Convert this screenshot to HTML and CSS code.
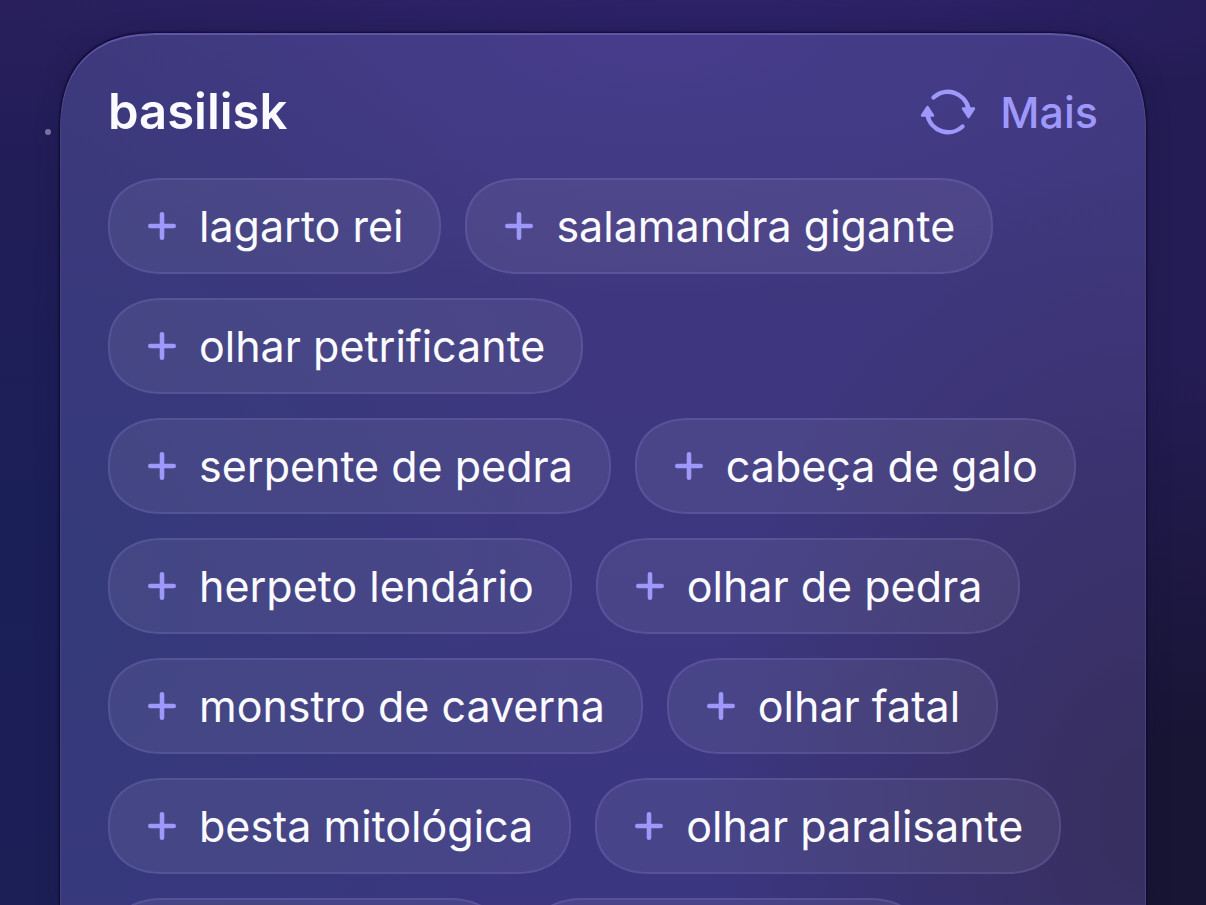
FILE: index.html
```html
<!DOCTYPE html>
<html lang="pt-BR">
<head>
    <meta charset="UTF-8">
    <meta name="viewport" content="width=device-width, initial-scale=1">
    <title>basilisk</title>
    <link rel="stylesheet" href="styles.css">
</head>
<body>
    <!-- Formas reutilizadas -->
    <svg class="sprite" aria-hidden="true">
        <symbol id="mais" viewBox="0 0 28 28">
            <path d="M14 2.3v23.4M2.3 14h23.4" fill="none" stroke="currentColor" stroke-width="4.6" stroke-linecap="round"/>
        </symbol>
    </svg>

    <span class="star"></span>

    <main class="panel">
        <header class="panel-header">
            <h1>basilisk</h1>
            <button class="more" type="button">
                <svg class="more-icon" viewBox="0 0 56 48" aria-hidden="true">
                    <g fill="none" stroke="currentColor" stroke-width="4.4" stroke-linecap="round">
                        <path d="M13.5 9.5A21 21 0 0 1 48.5 21"/>
                        <path d="M42.5 38.5A21 21 0 0 1 7.5 27"/>
                    </g>
                    <g fill="currentColor" stroke="currentColor" stroke-width="2.4" stroke-linejoin="round">
                        <path d="M43 20.5H54L48.5 29Z"/>
                        <path d="M2 27.5H13L7.5 19Z"/>
                    </g>
                </svg>
                Mais
            </button>
        </header>

        <div class="chips">
            <button class="chip" type="button"><svg class="plus"><use href="#mais"/></svg>lagarto rei</button>
            <button class="chip" type="button"><svg class="plus"><use href="#mais"/></svg>salamandra gigante</button>
            <button class="chip" type="button"><svg class="plus"><use href="#mais"/></svg>olhar petrificante</button>
            <button class="chip" type="button"><svg class="plus"><use href="#mais"/></svg>serpente de pedra</button>
            <button class="chip" type="button"><svg class="plus"><use href="#mais"/></svg>cabeça de galo</button>
            <button class="chip" type="button"><svg class="plus"><use href="#mais"/></svg>herpeto lendário</button>
            <button class="chip" type="button"><svg class="plus"><use href="#mais"/></svg>olhar de pedra</button>
            <button class="chip" type="button"><svg class="plus"><use href="#mais"/></svg>monstro de caverna</button>
            <button class="chip" type="button"><svg class="plus"><use href="#mais"/></svg>olhar fatal</button>
            <button class="chip" type="button"><svg class="plus"><use href="#mais"/></svg>besta mitológica</button>
            <button class="chip" type="button"><svg class="plus"><use href="#mais"/></svg>olhar paralisante</button>
            <div class="chip chip-empty"></div>
            <div class="chip chip-empty"></div>
        </div>
    </main>
</body>
</html>
```

FILE: styles.css
```css
* {
    box-sizing: border-box;
}
body {
    margin: 0;
    height: 100vh;
    overflow: hidden;
    display: flex;
    flex-direction: column;
    font-family: Inter, "Liberation Sans", sans-serif;
    color: #fafaff;
    background:
        radial-gradient(ellipse 60% 60% at 100% 100%, #181434 30%, transparent),
        radial-gradient(ellipse 60% 12% at 60% 0%, #2d2269, transparent),
        linear-gradient(90deg, transparent 60%, #241c54 100%),
        linear-gradient(180deg, #281f5c 0%, #211d57 20%, #1b1f58 55%, #1c1f56 100%);
}
.sprite {
    display: none;
}
.star {
    position: absolute;
    top: 129px;
    left: 45px;
    width: 6px;
    height: 6px;
    border-radius: 50%;
    background: #77739f;
}
.panel {
    flex: 1;
    min-height: 0;
    overflow: hidden;
    margin: 33px 60px 0;
    padding: 48px 48px 0;
    border-radius: 84px 84px 0 0;
    background:
        radial-gradient(ellipse 40% 75% at 100% 90%, #382f61 10%, transparent),
        radial-gradient(ellipse 50% 80% at 0% 65%, #343a7a, transparent),
        radial-gradient(ellipse 60% 30% at 55% 0%, #463c8c, transparent),
        linear-gradient(180deg, #40397c 0%, #3e377f 35%, #3a3680 100%);
    box-shadow:
        inset 0 2px 1px #6257a9,
        inset 1px 0 1px #484381,
        inset -1px 0 1px #484381,
        0 0 2px 1px #0c0a2c,
        0 0 24px rgba(20, 16, 50, 0.25);
}
.panel-header {
    display: flex;
    align-items: center;
    justify-content: space-between;
    height: 62px;
    margin-bottom: 35px;
}
h1 {
    margin: 0;
    font-size: 49px;
    font-weight: 600;
    line-height: 60px;
}
button {
    font: inherit;
    color: inherit;
    cursor: pointer;
}
.more {
    display: flex;
    align-items: center;
    gap: 24px;
    padding: 0;
    border: none;
    background: none;
    font-size: 43px;
    font-weight: 500;
    line-height: 56px;
    color: #9f98fb;
}
.more-icon {
    width: 56px;
    height: 48px;
}
.chips {
    display: flex;
    flex-wrap: wrap;
    gap: 24px;
}
.chip {
    display: flex;
    align-items: center;
    gap: 23px;
    height: 96px;
    padding: 0 36px 0 38px;
    border: 2px solid rgba(165, 155, 230, 0.27);
    border-radius: 48px;
    background: rgba(255, 255, 255, 0.07);
    background-clip: padding-box;
    font-size: 43px;
    line-height: 56px;
    white-space: nowrap;
}
.plus {
    width: 28px;
    height: 28px;
    color: #9f98fb;
}
.chip-empty {
    width: 40%;
}

/* Cantos contínuos */
@supports (corner-shape: superellipse(1.2)) {
    .panel {
        border-radius: 100px 100px 0 0;
        corner-shape: superellipse(1.3);
    }
    .chip {
        border-radius: 56px / 48px;
        corner-shape: superellipse(1.2);
    }
}
```
